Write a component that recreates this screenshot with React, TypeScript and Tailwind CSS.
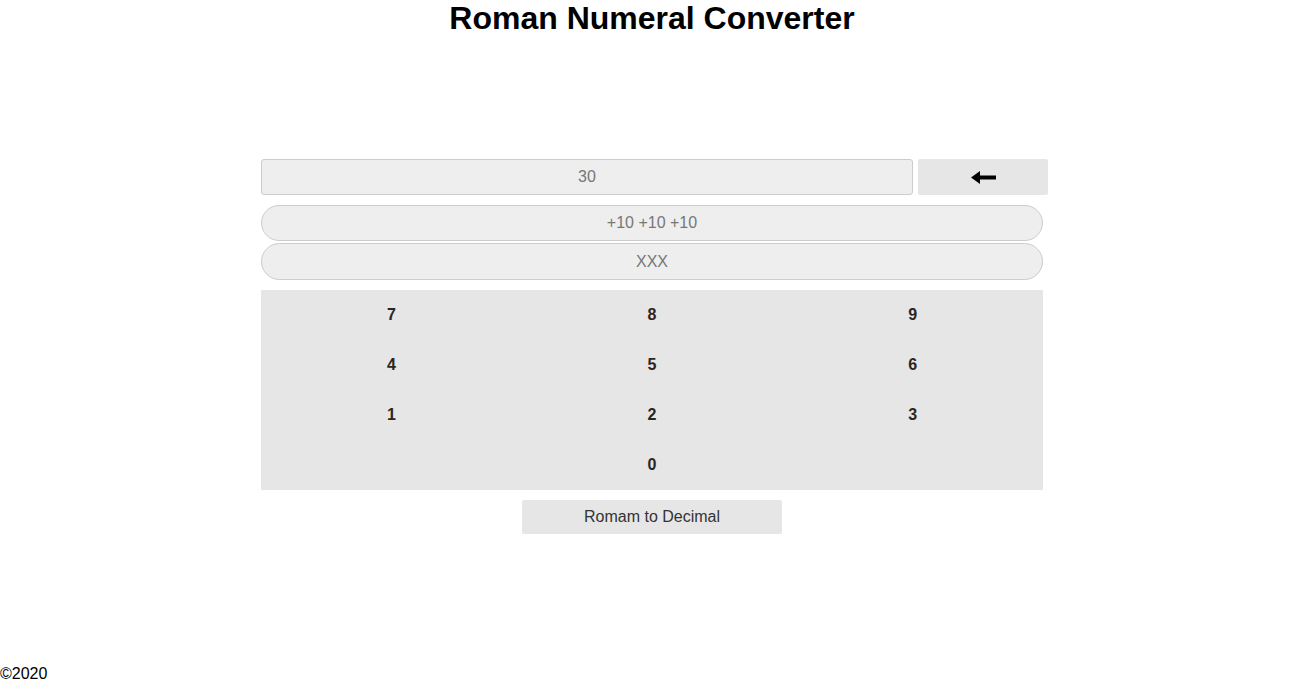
const keys = [
  ["7", "8", "9"],
  ["4", "5", "6"],
  ["1", "2", "3"],
]

const App = () => {
  return (
    <div className="h-screen flex flex-col bg-white text-black font-['Liberation_Sans',Arial,sans-serif]">
      <h1 className="text-center text-[32px] leading-[37px] font-bold">Roman Numeral Converter</h1>

      <div className="w-[782px] mx-auto mt-[122px] flex flex-col">
        <div className="flex gap-[5px]">
          <div className="w-[652px] shrink-0 h-[36px] flex items-center justify-center bg-[#eeeeee] border border-[#cccccc] rounded-[3px] text-[16px] text-[#777777]">
            30
          </div>
          <div className="w-[130px] shrink-0 h-[36px] flex items-center justify-center bg-[#e6e6e6] rounded-[2px]">
            <svg width="25" height="13" viewBox="0 0 25 13">
              <path d="M0 6.5 L9 0 L9 4.5 L25 4.5 L25 8.5 L9 8.5 L9 13 Z" fill="#000" />
            </svg>
          </div>
        </div>

        <div className="mt-[10px] h-[36px] flex items-center justify-center bg-[#eeeeee] border border-[#cccccc] rounded-full text-[16px] text-[#777777]">
          +10 +10 +10
        </div>
        <div className="mt-[2px] h-[37px] flex items-center justify-center bg-[#eeeeee] border border-[#cccccc] rounded-full text-[16px] text-[#777777]">
          XXX
        </div>

        <div className="mt-[10px] flex flex-col bg-[#e6e6e6]">
          {keys.map((row, i) => (
            <div key={i} className="grid grid-cols-3 h-[50px]">
              {row.map((k) => (
                <div key={k} className="flex items-center justify-center text-[16px] font-extrabold text-[#2b2522]">
                  {k}
                </div>
              ))}
            </div>
          ))}
          <div className="h-[50px] flex items-center justify-center text-[16px] font-extrabold text-[#2b2522]">0</div>
        </div>

        <div className="mt-[10px] flex justify-center">
          <div className="w-[260px] h-[34px] flex items-center justify-center bg-[#e6e6e6] rounded-[2px] text-[16px] text-[#333333]">
            Romam to Decimal
          </div>
        </div>
      </div>

      <footer className="mt-auto text-[16px] leading-[19px] pb-[1px]">©2020</footer>
    </div>
  )
}

export default App
